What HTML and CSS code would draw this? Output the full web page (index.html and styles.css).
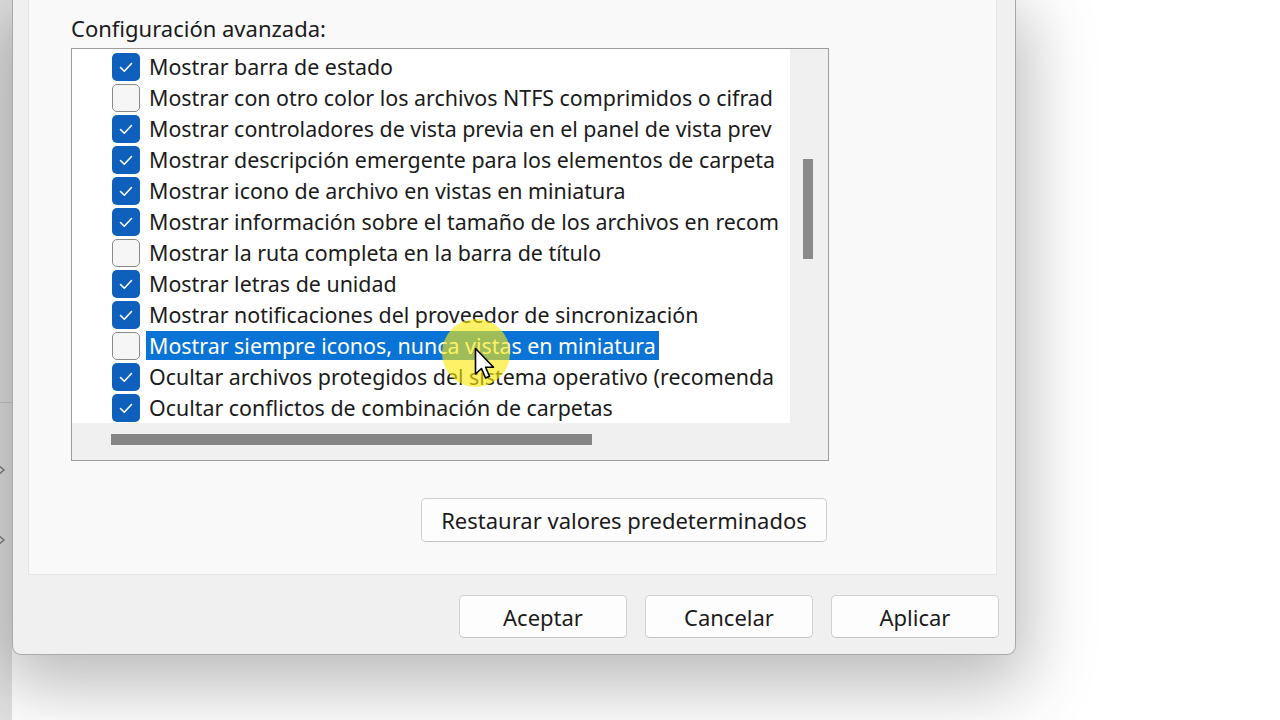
FILE: index.html
```html
<!DOCTYPE html>
<html lang="es">
<head>
  <meta charset="UTF-8" />
  <title>Opciones de carpeta</title>
  <link rel="stylesheet" href="styles.css">
</head>
<body>

<div class="desktop">
  <div class="explorer">
    <div class="explorer-top"></div>
    <svg class="chev" width="12" height="16" viewBox="0 0 12 16"><path d="M-2 3 L4 8 L-2 13" fill="none" stroke="#7a7a7a" stroke-width="1.4"/></svg>
    <svg class="chev chev-2" width="12" height="16" viewBox="0 0 12 16"><path d="M-2 3 L4 8 L-2 13" fill="none" stroke="#7a7a7a" stroke-width="1.4"/></svg>
  </div>

  <div class="dialog">
    <div class="tabpage">
      <div class="label">Configuración avanzada:</div>

      <div class="listbox">
        <div class="list-main">
          <div class="rows">
            <div class="row"><span class="box on"><svg viewBox="0 0 28 28"><path d="M8.5 14.5 L12.3 18.2 L19.5 10.5"/></svg></span><span class="text">Mostrar barra de estado</span></div>
            <div class="row"><span class="box"></span><span class="text">Mostrar con otro color los archivos NTFS comprimidos o cifrad</span></div>
            <div class="row"><span class="box on"><svg viewBox="0 0 28 28"><path d="M8.5 14.5 L12.3 18.2 L19.5 10.5"/></svg></span><span class="text">Mostrar controladores de vista previa en el panel de vista prev</span></div>
            <div class="row"><span class="box on"><svg viewBox="0 0 28 28"><path d="M8.5 14.5 L12.3 18.2 L19.5 10.5"/></svg></span><span class="text">Mostrar descripción emergente para los elementos de carpeta</span></div>
            <div class="row"><span class="box on"><svg viewBox="0 0 28 28"><path d="M8.5 14.5 L12.3 18.2 L19.5 10.5"/></svg></span><span class="text">Mostrar icono de archivo en vistas en miniatura</span></div>
            <div class="row"><span class="box on"><svg viewBox="0 0 28 28"><path d="M8.5 14.5 L12.3 18.2 L19.5 10.5"/></svg></span><span class="text">Mostrar información sobre el tamaño de los archivos en recom</span></div>
            <div class="row"><span class="box"></span><span class="text">Mostrar la ruta completa en la barra de título</span></div>
            <div class="row"><span class="box on"><svg viewBox="0 0 28 28"><path d="M8.5 14.5 L12.3 18.2 L19.5 10.5"/></svg></span><span class="text">Mostrar letras de unidad</span></div>
            <div class="row"><span class="box on"><svg viewBox="0 0 28 28"><path d="M8.5 14.5 L12.3 18.2 L19.5 10.5"/></svg></span><span class="text">Mostrar notificaciones del proveedor de sincronización</span></div>
            <div class="row"><span class="box"></span><span class="text selected">Mostrar siempre iconos, nunca vistas en miniatura</span></div>
            <div class="row"><span class="box on"><svg viewBox="0 0 28 28"><path d="M8.5 14.5 L12.3 18.2 L19.5 10.5"/></svg></span><span class="text">Ocultar archivos protegidos del sistema operativo (recomenda</span></div>
            <div class="row"><span class="box on"><svg viewBox="0 0 28 28"><path d="M8.5 14.5 L12.3 18.2 L19.5 10.5"/></svg></span><span class="text">Ocultar conflictos de combinación de carpetas</span></div>
          </div>
          <div class="hscroll"><div class="hthumb"></div></div>
        </div>
        <div class="vscroll"><div class="vthumb"></div></div>

        <!-- cursor highlight over the selected row -->
        <div class="spot"></div>
        <svg class="cursor" width="24" height="36" viewBox="0 0 24 36">
          <path d="M1.5 1.5 L1.5 27 L7.5 21.5 L11.5 31 L15.5 29.3 L11.6 20.2 L19.5 20.2 Z" fill="#fff" stroke="#000" stroke-width="1.6" stroke-linejoin="round"/>
        </svg>
      </div>

      <button class="btn restore">Restaurar valores predeterminados</button>
    </div>

    <div class="actions">
      <button class="btn action">Aceptar</button>
      <button class="btn action">Cancelar</button>
      <button class="btn action">Aplicar</button>
    </div>
  </div>
</div>

</body>
</html>
```

FILE: styles.css
```css
body {
  margin: 0;
  background: #fff;
  font-family: 'Noto Sans', 'Open Sans', sans-serif;
  color: #1b1b1b;
  overflow: hidden;
}

.desktop {
  display: flex;
  width: 1280px;
  height: 720px;
}

/* window behind the dialog */
.explorer {
  width: 12px;
  flex-shrink: 0;
  background: #e2e2e2;
  display: flex;
  flex-direction: column;
}

.explorer-top {
  height: 402px;
  border-bottom: 1px solid #c9c9c9;
}

.chev {
  margin-top: 59px;
}

.chev-2 {
  margin-top: 54px;
}

.dialog {
  width: 1004px;
  height: 655px;
  box-sizing: border-box;
  flex-shrink: 0;
  background: #f0f0f0;
  border: 1px solid #a9a9a9;
  border-top: none;
  border-radius: 0 0 9px 9px;
  box-shadow: 0 20px 70px 10px rgba(0, 0, 0, 0.28);
  padding: 0 18px 0 15px;
  display: flex;
  flex-direction: column;
}

.tabpage {
  height: 575px;
  box-sizing: border-box;
  background: #f9f9f9;
  border: 1px solid #e6e6e6;
  border-top: none;
  padding: 16px 0 0 42px;
  display: flex;
  flex-direction: column;
  align-items: flex-start;
}

.label {
  font-size: 22px;
  line-height: 24px;
  margin-bottom: 8px;
}

.listbox {
  position: relative;
  width: 758px;
  height: 413px;
  box-sizing: border-box;
  border: 1px solid #9c9c9c;
  background: #fff;
  display: flex;
}

.list-main {
  width: 718px;
  display: flex;
  flex-direction: column;
}

.rows {
  height: 374px;
  overflow: hidden;
  padding: 2px 0 0 40px;
  box-sizing: border-box;
}

.row {
  height: 31px;
  display: flex;
  align-items: center;
  gap: 6px;
  white-space: nowrap;
}

.box {
  width: 28px;
  height: 28px;
  box-sizing: border-box;
  flex-shrink: 0;
  border-radius: 5px;
  border: 1.5px solid #8a8a8a;
  background: #f6f6f6;
}

.box.on {
  border: none;
  background: #0f5fbd;
}

.box svg {
  width: 28px;
  height: 28px;
  display: block;
}

.box svg path {
  fill: none;
  stroke: #fff;
  stroke-width: 1.6;
  stroke-linecap: round;
  stroke-linejoin: round;
}

.text {
  font-size: 21.4px;
  line-height: 29px;
  padding: 0 3px;
}

.text.selected {
  background: #0a74d6;
  color: #fff;
}

.hscroll {
  height: 37px;
  background: #f0f0f0;
  padding: 11px 0 0 39px;
  box-sizing: border-box;
}

.hthumb {
  width: 481px;
  height: 11px;
  background: #858585;
}

.vscroll {
  flex: 1;
  background: #f0f0f0;
  padding: 110px 0 0 13px;
  box-sizing: border-box;
}

.vthumb {
  width: 10px;
  height: 100px;
  background: #8a8a8a;
}

.spot {
  position: absolute;
  left: 370px;
  top: 270px;
  width: 68px;
  height: 68px;
  border-radius: 50%;
  background: rgba(250, 232, 10, 0.62);
}

.cursor {
  position: absolute;
  left: 402px;
  top: 298px;
}

.btn {
  font-family: inherit;
  color: #1b1b1b;
  background: #fdfdfd;
  border: 1px solid #d0d0d0;
  border-bottom-color: #c2c2c2;
  border-radius: 5px;
  font-size: 22px;
  cursor: pointer;
}

.restore {
  align-self: flex-start;
  margin: 37px 0 0 350px;
  width: 406px;
  height: 44px;
}

.actions {
  display: flex;
  justify-content: flex-end;
  gap: 18px;
  margin: 20px -2px 0 0;
}

.action {
  width: 168px;
  height: 43px;
}
```
